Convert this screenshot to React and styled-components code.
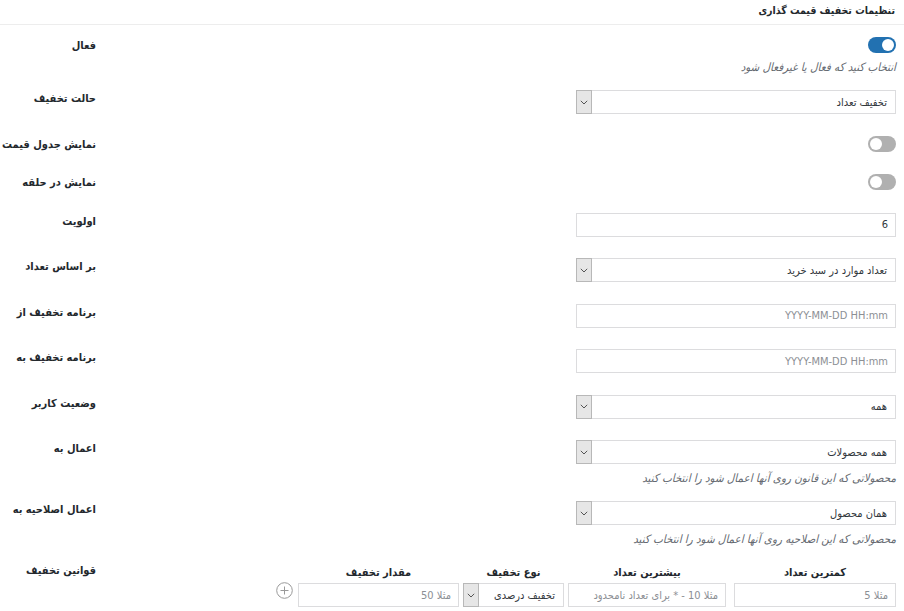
import React from 'react';
import styled, { createGlobalStyle } from 'styled-components';

const Global = createGlobalStyle`
  html, body { margin: 0; padding: 0; background: #fff; }
  body { font-family: "DejaVu Sans Condensed", "DejaVu Sans", sans-serif; font-size: 11px; color: #32373c; }
  * { box-sizing: border-box; }
`;

const Header = styled.div`
  direction: rtl;
  height: 25px;
  border-bottom: 1px solid #ededed;
  padding: 3px 9px 0 0;
  font-weight: bold;
  font-size: 10.5px;
  line-height: 14px;
  color: #23282d;
`;

const Row = styled.div`
  display: grid;
  grid-template-columns: 96px 1fr;
  align-items: start;
  padding: ${p => p.$pt ?? 11}px 8px ${p => p.$pb ?? 10.5}px 0;
`;

const Label = styled.div`
  direction: rtl;
  text-align: right;
  font-weight: bold;
  font-size: 11px;
  line-height: 17px;
  color: #23282d;
  white-space: nowrap;
`;

const Field = styled.div`
  direction: rtl;
  display: flex;
  flex-direction: column;
  align-items: flex-start;
`;

const Toggle = styled.span`
  position: relative;
  display: block;
  width: 28px;
  height: 16px;
  border-radius: 8px;
  background: ${p => (p.$on ? '#2271b1' : '#b0b0b0')};
  &::after {
    content: '';
    position: absolute;
    top: 2px;
    ${p => (p.$on ? 'right: 2px;' : 'left: 2px;')}
    width: 12px;
    height: 12px;
    border-radius: 50%;
    background: #fff;
  }
`;

const Desc = styled.p`
  margin: 7px 0 0;
  font-style: italic;
  font-size: 11.5px;
  line-height: 14px;
  color: #646970;
  white-space: nowrap;
`;

const SelectBox = styled.div`
  width: ${p => p.$w ?? 320}px;
  height: 24px;
  border: 1px solid #dcdcde;
  background: #fff;
  display: flex;
  align-items: stretch;
  font-size: 11px;
  color: #32373c;
`;

const SelectValue = styled.span`
  flex: 1;
  display: flex;
  align-items: center;
  padding: 0 8px 0 6px;
  white-space: nowrap;
`;

const ArrowBox = styled.span`
  width: 16px;
  margin: -1px 0 -1px -1px;
  border: 1px solid #b8b8b8;
  background: #e6e6e6;
  display: flex;
  align-items: center;
  justify-content: center;
`;

const Input = styled.input`
  width: ${p => p.$w ?? 320}px;
  height: 24px;
  border: 1px solid #dcdcde;
  border-radius: 0;
  padding: 0 7px;
  margin: 0;
  font-family: inherit;
  font-size: 11px;
  color: #32373c;
  direction: rtl;
  background: #fff;
  outline: none;
  &::placeholder { color: #8c8f94; }
`;

const Rules = styled.div`
  direction: rtl;
  display: flex;
  align-items: flex-end;
  margin-top: 4px;
`;

const RuleCol = styled.div`
  width: ${p => p.$w}px;
  margin-left: ${p => p.$gap}px;
  display: flex;
  flex-direction: column;
  align-items: center;
`;

const RuleHead = styled.div`
  font-weight: bold;
  font-size: 11px;
  line-height: 14px;
  color: #23282d;
  margin-bottom: 3px;
  white-space: nowrap;
`;

const PlusBtn = styled.span`
  display: block;
  width: 17px;
  height: 17px;
  margin-bottom: 8px;
  color: #999;
`;

const Chevron = () => (
  <svg width="8" height="5" viewBox="0 0 8 5">
    <path d="M0.8 0.8 L4 4 L7.2 0.8" fill="none" stroke="#555" strokeWidth="1" />
  </svg>
);

const Select = ({ w, children }) => (
  <SelectBox $w={w}>
    <SelectValue>{children}</SelectValue>
    <ArrowBox><Chevron /></ArrowBox>
  </SelectBox>
);

export default function App() {
  return (
    <>
      <Global />
      <Header>تنظیمات تخفیف قیمت گذاری</Header>

      <Row $pt={12} $pb={5}>
        <Label>فعال</Label>
        <Field>
          <Toggle $on />
          <Desc>انتخاب کنید که فعال یا غیرفعال شود</Desc>
        </Field>
      </Row>

      <Row>
        <Label>حالت تخفیف</Label>
        <Field><Select>تخفیف تعداد</Select></Field>
      </Row>

      <Row>
        <Label>نمایش جدول قیمت</Label>
        <Field><Toggle /></Field>
      </Row>

      <Row>
        <Label>نمایش در حلقه</Label>
        <Field><Toggle /></Field>
      </Row>

      <Row>
        <Label>اولویت</Label>
        <Field><Input defaultValue="6" /></Field>
      </Row>

      <Row>
        <Label>بر اساس تعداد</Label>
        <Field><Select>تعداد موارد در سبد خرید</Select></Field>
      </Row>

      <Row>
        <Label>برنامه تخفیف از</Label>
        <Field><Input placeholder="YYYY-MM-DD HH:mm" /></Field>
      </Row>

      <Row>
        <Label>برنامه تخفیف به</Label>
        <Field><Input placeholder="YYYY-MM-DD HH:mm" /></Field>
      </Row>

      <Row>
        <Label>وضعیت کاربر</Label>
        <Field><Select>همه</Select></Field>
      </Row>

      <Row $pb={5}>
        <Label>اعمال به</Label>
        <Field>
          <Select>همه محصولات</Select>
          <Desc>محصولاتی که این قانون روی آنها اعمال شود را انتخاب کنید</Desc>
        </Field>
      </Row>

      <Row $pb={5}>
        <Label>اعمال اصلاحیه به</Label>
        <Field>
          <Select>همان محصول</Select>
          <Desc>محصولاتی که این اصلاحیه روی آنها اعمال شود را انتخاب کنید</Desc>
        </Field>
      </Row>

      <Row $pb={6}>
        <Label>قوانین تخفیف</Label>
        <Rules>
          <RuleCol $w={162} $gap={8}>
            <RuleHead>کمترین تعداد</RuleHead>
            <Input $w={162} placeholder="مثلا 5" />
          </RuleCol>
          <RuleCol $w={158} $gap={4}>
            <RuleHead>بیشترین تعداد</RuleHead>
            <Input $w={158} placeholder="مثلا 10 - * برای تعداد نامحدود" />
          </RuleCol>
          <RuleCol $w={101} $gap={4}>
            <RuleHead>نوع تخفیف</RuleHead>
            <Select w={101}>تخفیف درصدی</Select>
          </RuleCol>
          <RuleCol $w={161} $gap={5}>
            <RuleHead>مقدار تخفیف</RuleHead>
            <Input $w={161} placeholder="مثلا 50" />
          </RuleCol>
          <PlusBtn>
            <svg width="17" height="17" viewBox="0 0 17 17">
              <circle cx="8.5" cy="8.5" r="7.8" fill="none" stroke="#999" strokeWidth="1" />
              <path d="M8.5 4.5 V12.5 M4.5 8.5 H12.5" stroke="#999" strokeWidth="1" />
            </svg>
          </PlusBtn>
        </Rules>
      </Row>
    </>
  );
}
